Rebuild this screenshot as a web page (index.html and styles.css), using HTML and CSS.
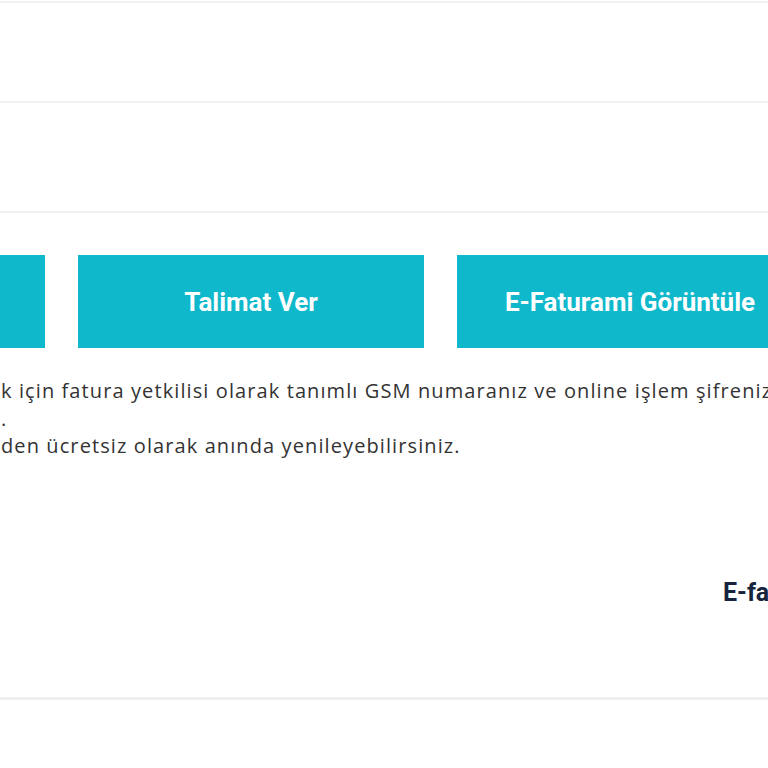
FILE: index.html
```html
<!DOCTYPE html>
<html lang="tr">

<head>
    <meta charset="utf-8">
    <meta name="viewport" content="width=device-width, initial-scale=1.0">
    <title>Fatura</title>

    <link rel="stylesheet" href="styles.css">

</head>

<body>

    <div class="satir ilk"></div>
    <div class="satir"></div>
    <div class="satir uzun"></div>

    <section id="fatura">
        <header class="knapper">
            <button class="knap">Öde</button>
            <button class="knap">Talimat Ver</button>
            <button class="knap">E-Faturami Görüntüle</button>
        </header>

        <p class="bilgi">
            k için fatura yetkilisi olarak tanımlı GSM numaranız ve online işlem şifreniz gerekmektedir<br>
            .<br>
            den ücretsiz olarak anında yenileyebilirsiniz.
        </p>

        <h2 class="baslik">E-fatura Bilgileri</h2>
    </section>

    <div class="cizgi"></div>

</body>

</html>
```

FILE: styles.css
```css
body {
    margin: 0;
    overflow: hidden;
    background-color: #fff;
    font-family: Roboto, "Liberation Sans", sans-serif;
}

.satir {
    height: 2px;
    background-color: #f0f0f0;
    margin-top: 1px;
}

.satir + .satir {
    margin-top: 98px;
}

.satir.uzun {
    margin-top: 108px;
}

#fatura {
    padding-top: 42px;
    height: 442px;
}

.knapper {
    display: grid;
    grid-template-columns: repeat(3, 346px);
    column-gap: 33px;
    margin-left: -301px;
}

.knap {
    height: 93px;
    border: none;
    background-color: #0fb8cb;
    color: #fff;
    font-family: Roboto, "Liberation Sans", sans-serif;
    font-size: 26px;
    font-weight: 700;
    padding: 0;
}

.bilgi {
    margin: 29px 0 0 1px;
    font-family: "Open Sans", Roboto, sans-serif;
    font-size: 20px;
    line-height: 27.5px;
    letter-spacing: 1.1px;
    color: #333;
    white-space: nowrap;
}

.baslik {
    margin: 118px 0 0 723px;
    font-size: 25px;
    font-weight: 700;
    color: #16243d;
    white-space: nowrap;
}

.cizgi {
    height: 3px;
    background-color: #efefef;
}
```
